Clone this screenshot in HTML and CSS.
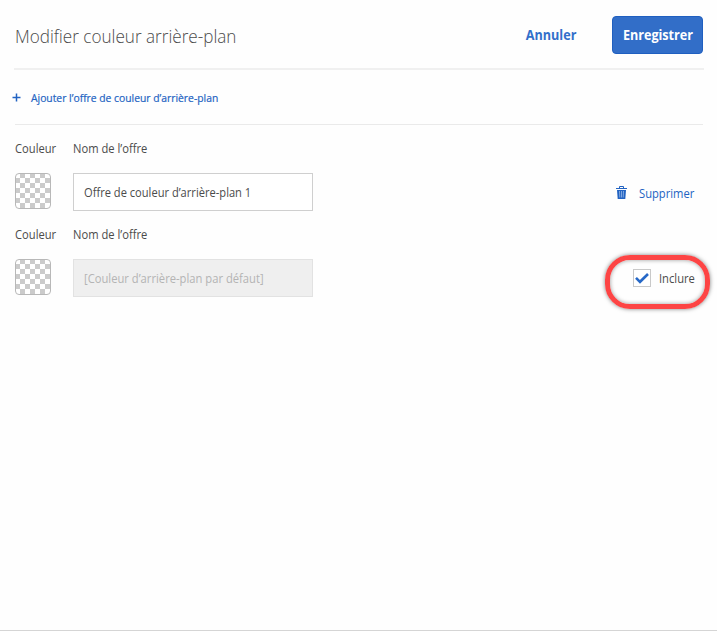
FILE: index.html
```html
<!DOCTYPE html>
<html lang="fr">
<head>
<meta charset="utf-8">
<title>Modifier couleur arrière-plan</title>
<link rel="stylesheet" href="styles.css">
</head>
<body>
<main class="dialog">
  <header class="header">
    <h1 class="title">Modifier couleur arrière-plan</h1>
    <button class="btn cancel"><span class="btn-text">Annuler</span></button>
    <button class="btn save"><span class="btn-text">Enregistrer</span></button>
  </header>
  <div class="toolbar">
    <svg class="plus" width="9" height="9" viewBox="0 0 9 9"><path d="M4.5 .5v8M.5 4.5h8" stroke="#2263c2" stroke-width="1.5"/></svg>
    <a class="add">Ajouter l’offre de couleur d’arrière-plan</a>
  </div>
  <section class="offer">
    <span class="label text">Couleur</span>
    <span class="label name text">Nom de l’offre</span>
    <span class="swatch"></span>
    <div class="field"><span class="text">Offre de couleur d’arrière-plan 1</span></div>
    <a class="remove">
      <svg width="11" height="13" viewBox="0 0 11 13"><path d="M3.5 2V.5h4V2" fill="none" stroke="#2263c2"/><path d="M0 2h11v1H0zM1 4h9l-.7 9H1.700z" fill="#2263c2"/><path d="M3.500 5l.3 6.500M5.500 5v6.500M7.500 5l-.3 6.500" stroke="#a9c4ea" stroke-width=".7"/></svg>
      <span class="remove-text text">Supprimer</span>
    </a>
  </section>
  <section class="offer">
    <span class="label text">Couleur</span>
    <span class="label name text">Nom de l’offre</span>
    <span class="swatch"></span>
    <div class="field disabled"><span class="text">[Couleur d’arrière-plan par défaut]</span></div>
    <label class="include">
      <span class="check"><svg width="16" height="16" viewBox="0 0 16 16"><path d="M2 7.800l4 4L14 4" fill="none" stroke="#2668c7" stroke-width="2.600"/></svg></span>
      <span class="include-text text">Inclure</span>
      <span class="highlight"></span>
    </label>
  </section>
</main>
</body>
</html>
```
FILE: styles.css
```css
* { box-sizing: border-box; }
body { margin: 0; background: #fefefe; font-family: "Open Sans", "Noto Sans", sans-serif; color: #4b4b4b; }
.dialog { height: 631px; border-bottom: 1px solid #d5d5d5; overflow: hidden; }
.header { height: 70px; margin: 0 13px 0 14px; padding: 16px 1px 0; border-bottom: 2px solid #f0f0f0; display: flex; align-items: flex-start; }
.title { margin: 0 auto 0 0; font-size: 19px; line-height: 40px; font-weight: 330; white-space: nowrap; transform: scaleX(.9); transform-origin: left; }
.btn { height: 38px; padding: 0; font: 700 14px/36px "Open Sans", sans-serif; border: 1px solid transparent; border-radius: 4px; background: none; white-space: nowrap; display: flex; justify-content: center; }
.btn-text { display: block; transform: scaleX(.9); }
.cancel { width: 54px; margin-right: 34px; color: #326fca; }
.save { width: 91px; background: #326ec8; border-color: #1f5fc0; color: #fff; }
.toolbar { height: 55px; margin: 0 14px 0 15px; border-bottom: 1px solid #eaeaea; display: flex; align-items: center; color: #2263c2; }
.plus { margin: 1px 10px 0 -3px; }
.add { font-size: 11.5px; white-space: nowrap; transform: scaleX(.898); transform-origin: left; -webkit-text-stroke: .2px; }
.offer { height: 86px; padding: 14px 22px 0 15px; display: grid; grid-template-columns: 58px 240px 1fr; grid-template-rows: 20px 38px; row-gap: 14px; font-size: 12.5px; white-space: nowrap; }
.text { display: block; transform: scaleX(.895); transform-origin: left; }
.label { line-height: 20px; }
.name { grid-column: 2 / 4; }
.swatch { width: 36px; height: 36px; border: 1px solid #b8b8b8; border-radius: 4px; background: conic-gradient(#cbcbcb 25%, #fff 0 50%, #cbcbcb 0 75%, #fff 0) 0 0 / 10px 10px border-box; }
.field { height: 38px; border: 1px solid #cfcfcf; background: #fff; padding: 1px 0 0 10px; line-height: 36px; }
.field .text { transform: scaleX(.89); }
.disabled { border-color: #e2e2e2; background: #efefef; color: #b4b4b4; }
.disabled .text { transform: scaleX(.897); }
.remove { display: flex; justify-content: flex-end; align-items: center; gap: 12px; height: 38px; color: #2263c2; }
.remove-text { width: 56px; padding-top: 2px; }
.include { position: relative; display: flex; justify-content: flex-end; align-items: center; height: 38px; gap: 8px; }
.include-text { width: 36px; }
.check { width: 18px; height: 18px; border: 1px solid #c9c9c9; background: #fff; }
.check svg { display: block; }
.highlight { position: absolute; right: -15px; top: -4px; width: 105px; height: 54px; border: 5px solid #fd4444; border-radius: 25px; box-shadow: 0 0 4px rgba(0,0,0,.5), inset 0 0 4px rgba(0,0,0,.4); }
```
